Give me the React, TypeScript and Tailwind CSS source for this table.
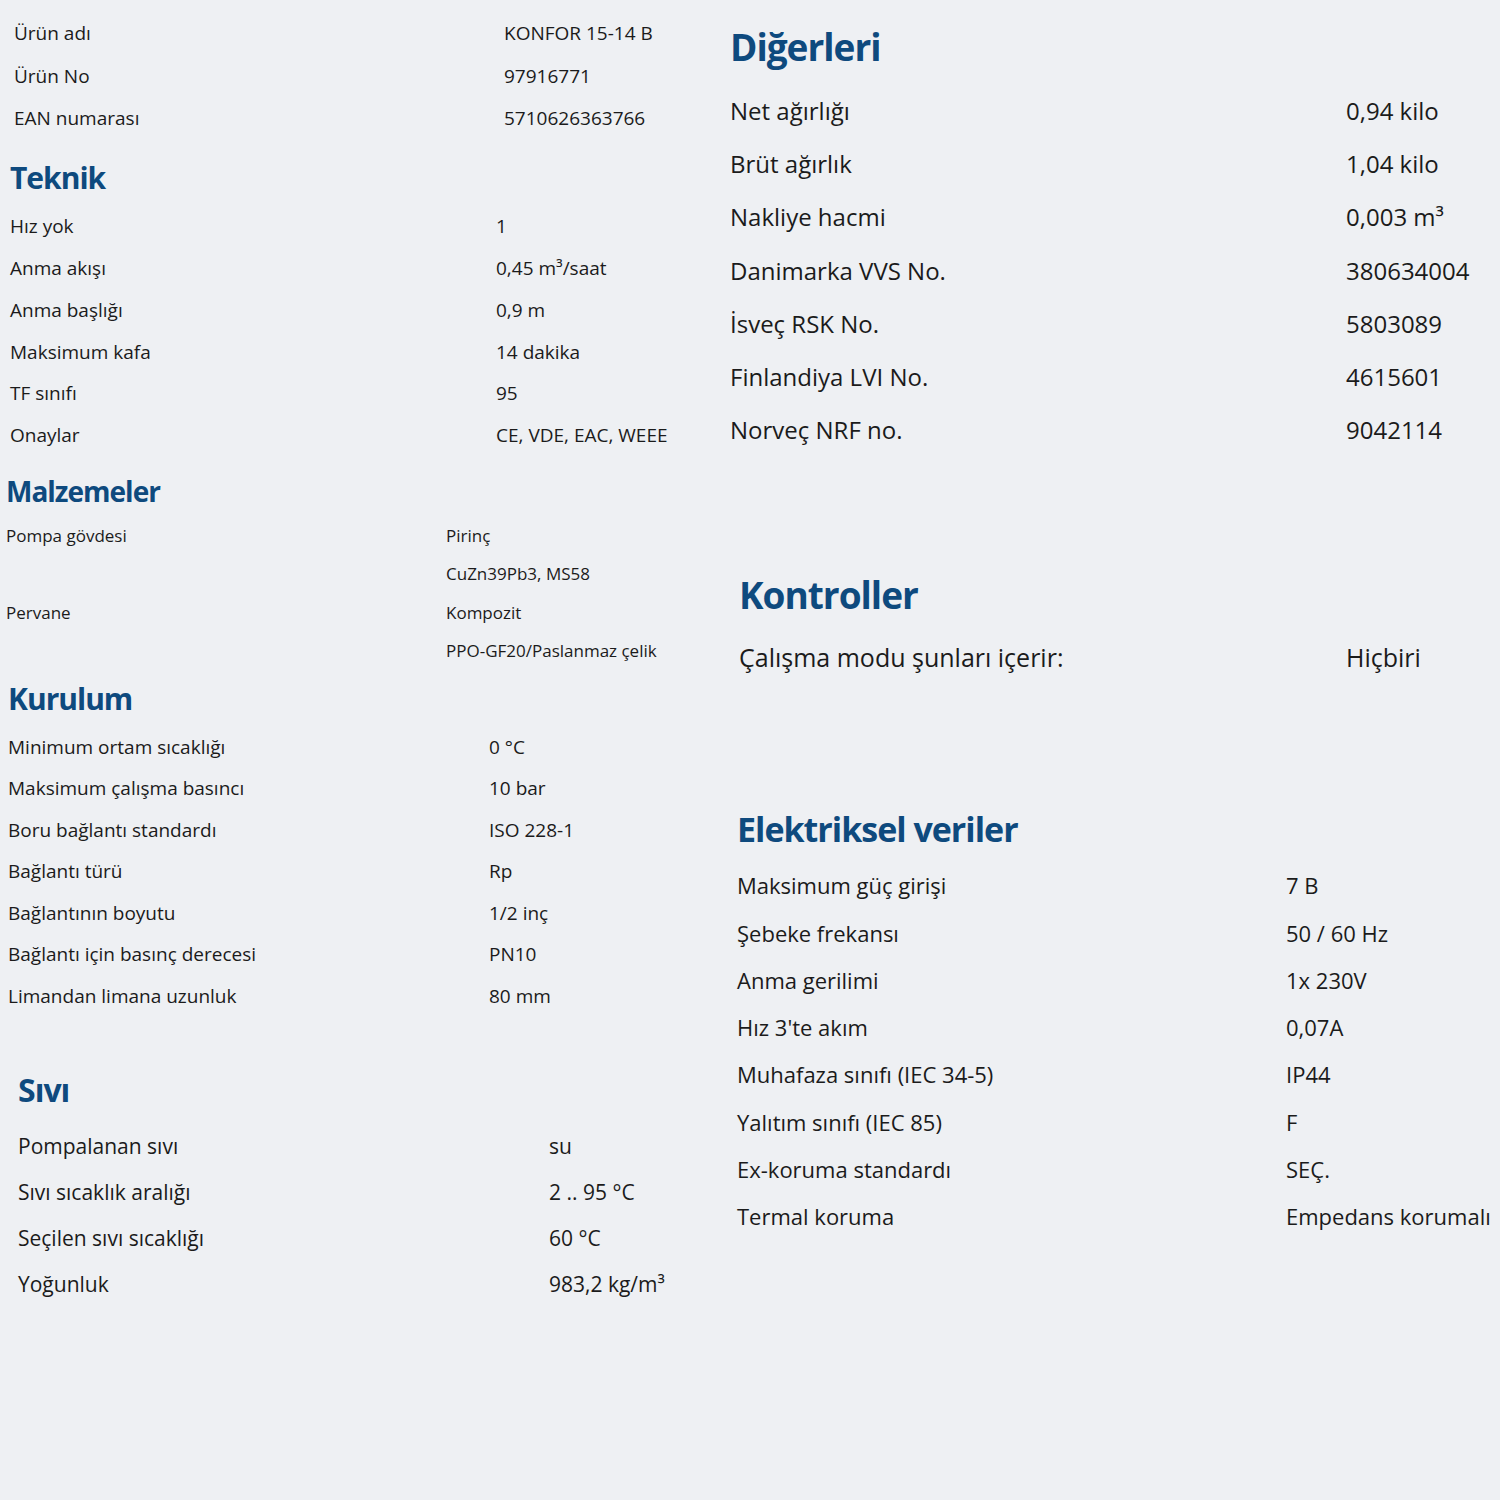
type Row = [string, string];

type SectionProps = {
	title?: string;
	rows: Row[];
	className: string;
	labelWidth: string;
	rowClass: string;
	titleClass?: string;
};

const Section = ({ title, rows, className, labelWidth, rowClass, titleClass }: SectionProps) => {
	return (
		<div className={className}>
			{title && <h2 className={`font-bold text-[#0e4a7e] tracking-[-1px] ${titleClass}`}>{title}</h2>}
			{rows.map(([label, value], i) => (
				<div key={i} className={`flex items-center ${rowClass}`}>
					<span className={`shrink-0 ${labelWidth}`}>{label}</span>
					<span className="whitespace-nowrap">{value}</span>
				</div>
			))}
		</div>
	);
};

const App = () => {
	return (
		<div
			className="w-[1500px] h-[1500px] bg-[#eef0f3] text-[#1b1b1b] flex overflow-hidden"
			style={{ fontFamily: '"Open Sans", "Noto Sans", sans-serif' }}
		>
			{/* left column */}
			<div className="w-[720px] shrink-0">
				<Section
					className="pl-[14px] pt-[12px]"
					labelWidth="w-[490px]"
					rowClass="h-[42.5px] text-[19px]"
					rows={[
						['Ürün adı', 'KONFOR 15-14 B'],
						['Ürün No', '97916771'],
						['EAN numarası', '5710626363766'],
					]}
				/>
				<Section
					title="Teknik"
					className="pl-[10px] mt-[18px]"
					titleClass="text-[30px] leading-[40px] mb-[8px]"
					labelWidth="w-[486px]"
					rowClass="h-[41.8px] text-[19px]"
					rows={[
						['Hız yok', '1'],
						['Anma akışı', '0,45 m³/saat'],
						['Anma başlığı', '0,9 m'],
						['Maksimum kafa', '14 dakika'],
						['TF sınıfı', '95'],
						['Onaylar', 'CE, VDE, EAC, WEEE'],
					]}
				/>
				<Section
					title="Malzemeler"
					className="pl-[6px] mt-[16px]"
					titleClass="text-[28px] leading-[38px] mb-[6px]"
					labelWidth="w-[440px]"
					rowClass="h-[38.5px] text-[17px]"
					rows={[
						['Pompa gövdesi', 'Pirinç'],
						['', 'CuZn39Pb3, MS58'],
						['Pervane', 'Kompozit'],
						['', 'PPO-GF20/Paslanmaz çelik'],
					]}
				/>
				<Section
					title="Kurulum"
					className="pl-[8px] mt-[9px]"
					titleClass="text-[30px] leading-[40px] mb-[7px]"
					labelWidth="w-[481px]"
					rowClass="h-[41.5px] text-[19px]"
					rows={[
						['Minimum ortam sıcaklığı', '0 °C'],
						['Maksimum çalışma basıncı', '10 bar'],
						['Boru bağlantı standardı', 'ISO 228-1'],
						['Bağlantı türü', 'Rp'],
						['Bağlantının boyutu', '1/2 inç'],
						['Bağlantı için basınç derecesi', 'PN10'],
						['Limandan limana uzunluk', '80 mm'],
					]}
				/>
				<Section
					title="Sıvı"
					className="pl-[18px] mt-[52px]"
					titleClass="text-[32px] leading-[42px] mb-[13px]"
					labelWidth="w-[531px]"
					rowClass="h-[46px] text-[21px]"
					rows={[
						['Pompalanan sıvı', 'su'],
						['Sıvı sıcaklık aralığı', '2 .. 95 °C'],
						['Seçilen sıvı sıcaklığı', '60 °C'],
						['Yoğunluk', '983,2 kg/m³'],
					]}
				/>
			</div>

			{/* right column */}
			<div className="flex-1">
				<Section
					title="Diğerleri"
					className="pl-[10px] pt-[22px]"
					titleClass="text-[37px] leading-[50px] mb-[12px] tracking-[-0.75px]"
					labelWidth="w-[616px]"
					rowClass="h-[53.3px] text-[24px]"
					rows={[
						['Net ağırlığı', '0,94 kilo'],
						['Brüt ağırlık', '1,04 kilo'],
						['Nakliye hacmi', '0,003 m³'],
						['Danimarka VVS No.', '380634004'],
						['İsveç RSK No.', '5803089'],
						['Finlandiya LVI No.', '4615601'],
						['Norveç NRF no.', '9042114'],
					]}
				/>
				<Section
					title="Kontroller"
					className="pl-[19px] mt-[113px]"
					titleClass="text-[37px] leading-[50px] mb-[11px]"
					labelWidth="w-[607px]"
					rowClass="h-[53px] text-[25px]"
					rows={[['Çalışma modu şunları içerir:', 'Hiçbiri']]}
				/>
				<Section
					title="Elektriksel veriler"
					className="pl-[17px] mt-[121px]"
					titleClass="text-[34px] leading-[48px] mb-[9px]"
					labelWidth="w-[549px]"
					rowClass="h-[47.3px] text-[22px]"
					rows={[
						['Maksimum güç girişi', '7 B'],
						['Şebeke frekansı', '50 / 60 Hz'],
						['Anma gerilimi', '1x 230V'],
						["Hız 3'te akım", '0,07A'],
						['Muhafaza sınıfı (IEC 34-5)', 'IP44'],
						['Yalıtım sınıfı (IEC 85)', 'F'],
						['Ex-koruma standardı', 'SEÇ.'],
						['Termal koruma', 'Empedans korumalı'],
					]}
				/>
			</div>
		</div>
	);
};

export default App;
